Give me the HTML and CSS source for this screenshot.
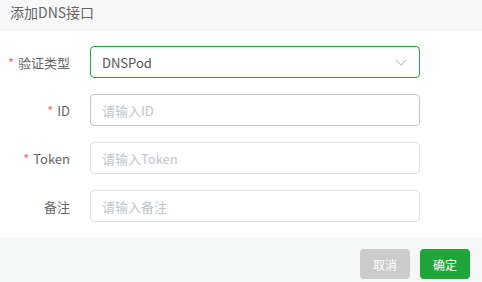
FILE: index.html
```html
<!doctype html>
<html lang="zh-CN">
  <head>
    <meta charset="UTF-8" />
    <meta name="viewport" content="width=device-width, initial-scale=1.0" />
    <title>添加DNS接口</title>
    <link rel="stylesheet" href="styles.css">
  </head>
  <body>
    <div class="dialog">
      <div class="dialog-header">添加DNS接口</div>

      <div class="dialog-body">
        <div class="form-row">
          <label class="form-label"><span class="required">*</span>验证类型</label>
          <div class="select">
            <span>DNSPod</span>
            <svg class="arrow" width="12" height="7" viewBox="0 0 12 7">
              <path d="M1 1 L6 6 L11 1" fill="none" stroke="#c0c4cc" stroke-width="1.2" />
            </svg>
          </div>
        </div>

        <div class="form-row">
          <label class="form-label"><span class="required">*</span>ID</label>
          <input class="input input-hover" type="text" placeholder="请输入ID">
        </div>

        <div class="form-row">
          <label class="form-label"><span class="required">*</span>Token</label>
          <input class="input" type="text" placeholder="请输入Token">
        </div>

        <div class="form-row">
          <label class="form-label">备注</label>
          <input class="input" type="text" placeholder="请输入备注">
        </div>
      </div>

      <div class="dialog-footer">
        <button class="button button-cancel">取消</button>
        <button class="button button-primary">确定</button>
      </div>
    </div>
  </body>
</html>
```

FILE: styles.css
```css
body {
  font-family: "Noto Sans CJK SC", "Noto Sans", sans-serif;
  margin: 0;
  padding: 0;
  background-color: white;
}
.dialog {
  width: 482px;
  height: 282px;
  display: flex;
  flex-direction: column;
}
.dialog-header {
  height: 29px;
  line-height: 24px;
  padding-left: 10px;
  font-size: 14px;
  color: #666;
  background-color: #f8f8f8;
  border-bottom: 1px solid #eee;
}
.dialog-body {
  flex: 1;
  padding-top: 16px;
  display: flex;
  flex-direction: column;
  gap: 16px;
}
.form-row {
  display: flex;
  align-items: center;
}
.form-label {
  width: 70px;
  margin-right: 20px;
  text-align: right;
  font-size: 13px;
  color: #666;
}
.required {
  color: #f56c6c;
  margin-right: 4px;
}
.select,
.input {
  box-sizing: border-box;
  width: 330px;
  height: 32px;
  border: 1px solid #dcdfe6;
  border-radius: 4px;
  padding: 0 11px;
  font-family: inherit;
  font-size: 13px;
  color: #606266;
  outline: none;
}
.input::placeholder {
  color: #c0c4cc;
}
.input-hover {
  border-color: #c0c4cc;
}
.select {
  display: flex;
  align-items: center;
  justify-content: space-between;
  border-color: #20a53a;
  color: #555;
}
.arrow {
  margin-right: 1px;
}
.dialog-footer {
  height: 44px;
  box-sizing: border-box;
  background-color: #f5f7f7;
  border-top: 1px solid #eef0f0;
  display: flex;
  justify-content: flex-end;
  align-items: flex-start;
  gap: 10px;
  padding: 10px 12px 0 0;
}
.button {
  width: 50px;
  height: 30px;
  border: none;
  border-radius: 4px;
  color: white;
  font-family: inherit;
  font-size: 12px;
  cursor: pointer;
}
.button-cancel {
  background-color: #cbcbcb;
}
.button-primary {
  background-color: #20a53a;
}
```
